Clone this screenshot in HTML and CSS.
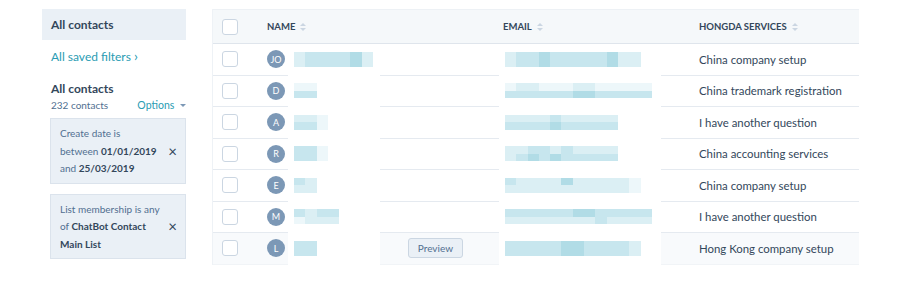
FILE: index.html
```html
<!DOCTYPE html>
<html lang="en">

<head>
    <meta charset="UTF-8">
    <meta name="viewport" content="width=device-width, initial-scale=1.0">
    <title>Contacts</title>
    <link rel="stylesheet" href="styles.css">
</head>

<body>
    <div class="page">
        <aside class="sidebar">
            <div class="view-current">All contacts</div>
            <a class="saved-link" href="#">All saved filters <span class="chev">&rsaquo;</span></a>
            <div class="list-title">All contacts</div>
            <div class="list-meta">
                <span>232 contacts</span>
                <span class="options">Options <span class="caret"></span></span>
            </div>
            <div class="filter">
                <p>
                    <span class="line">Create date is</span>
                    <span class="line">between <b>01/01/2019</b></span>
                    <span class="line">and <b>25/03/2019</b></span>
                </p>
                <span class="remove">&times;</span>
            </div>
            <div class="filter second">
                <p>
                    <span class="line">List membership is any</span>
                    <span class="line">of <b>ChatBot Contact</b></span>
                    <span class="line"><b>Main List</b></span>
                </p>
                <span class="remove">&times;</span>
            </div>
        </aside>

        <main class="contacts">
            <div class="row head">
                <div><span class="checkbox"></span></div>
                <div class="th">Name <span class="sort"></span></div>
                <div class="th">Email <span class="sort"></span></div>
                <div class="th">Hongda Services <span class="sort"></span></div>
            </div>

            <div class="row">
                <div><span class="checkbox"></span></div>
                <div class="name"><span class="avatar">JO</span><div class="blur name-blur" data-px="1222231|1222231"></div></div>
                <div><div class="blur email-blur" data-px="122322222311|122322222311"></div></div>
                <div class="service">China company setup</div>
            </div>
            <div class="row">
                <div><span class="checkbox"></span></div>
                <div class="name"><span class="avatar">D</span><div class="blur name-blur" data-px="00|22"></div></div>
                <div><div class="blur email-blur" data-px="0110001100000|2222223322222"></div></div>
                <div class="service">China trademark registration</div>
            </div>
            <div class="row">
                <div><span class="checkbox"></span></div>
                <div class="name"><span class="avatar">A</span><div class="blur name-blur" data-px="110|220"></div></div>
                <div><div class="blur email-blur" data-px="1111211111|2222322222"></div></div>
                <div class="service">I have another question</div>
            </div>
            <div class="row">
                <div><span class="checkbox"></span></div>
                <div class="name"><span class="avatar">R</span><div class="blur name-blur" data-px="220|220"></div></div>
                <div><div class="blur email-blur" data-px="1122121111|1232322222"></div></div>
                <div class="service">China accounting services</div>
            </div>
            <div class="row">
                <div><span class="checkbox"></span></div>
                <div class="name"><span class="avatar">E</span><div class="blur name-blur" data-px="21|11"></div></div>
                <div><div class="blur email-blur" data-px="211113111110|111111111110"></div></div>
                <div class="service">China company setup</div>
            </div>
            <div class="row">
                <div><span class="checkbox"></span></div>
                <div class="name"><span class="avatar">M</span><div class="blur name-blur" data-px="2122|0111"></div></div>
                <div><div class="blur email-blur" data-px="2222223322222|1111111121111"></div></div>
                <div class="service">I have another question</div>
            </div>
            <div class="row hover">
                <div><span class="checkbox"></span></div>
                <div class="name"><span class="avatar">L</span><div class="blur name-blur" data-px="22|22"></div><button class="preview">Preview</button></div>
                <div><div class="blur email-blur" data-px="222223322221|222223322221"></div></div>
                <div class="service">Hong Kong company setup</div>
            </div>
        </main>
    </div>
    <script src="script.js"></script>
</body>

</html>
```

FILE: styles.css
```css
body {
    margin: 0;
    font-family: Lato, "Open Sans", sans-serif;
    color: #33475b;
    background-color: #fff;
}

.page {
    display: flex;
    gap: 26px;
    padding: 9px 0 0 42px;
}

/* sidebar */

.sidebar {
    width: 144px;
    flex: none;
}

.view-current {
    height: 31px;
    display: flex;
    align-items: center;
    padding-left: 9px;
    background-color: #eaf0f6;
    font-size: 12px;
    font-weight: 700;
}

.saved-link {
    display: block;
    margin: 9px 0 0 9px;
    font-size: 12px;
    line-height: 14px;
    color: #2a9cb3;
    text-decoration: none;
}

.chev {
    font-size: 14px;
}

.list-title {
    margin: 18px 0 0 9px;
    font-size: 12px;
    font-weight: 700;
    line-height: 14px;
}

.list-meta {
    display: flex;
    justify-content: space-between;
    align-items: center;
    margin: 2px 0 0 9px;
    font-size: 10px;
    line-height: 14px;
    color: #516f90;
}

.options {
    font-size: 10.5px;
    color: #2a9cb3;
}

.caret {
    display: inline-block;
    margin-left: 3px;
    vertical-align: 2px;
    border-left: 3px solid transparent;
    border-right: 3px solid transparent;
    border-top: 3px solid #7c98b6;
}

.filter {
    display: flex;
    align-items: center;
    justify-content: space-between;
    margin: 6px 0 0 8px;
    padding: 6px 8px 5px 9px;
    background-color: #eaf0f6;
    border: 1px solid #dbe3ec;
    font-size: 10px;
    line-height: 17.5px;
    color: #516f90;
}

.filter.second {
    margin-top: 10px;
}

.filter p {
    margin: 0;
}

.filter .line {
    display: block;
    white-space: nowrap;
}

.filter b {
    color: #33475b;
}

.remove {
    font-size: 15px;
    color: #33475b;
}

/* table */

.contacts {
    width: 646px;
    border-left: 1px solid #eef2f6;
}

.row {
    display: grid;
    grid-template-columns: 54px 236px 196px 1fr;
    align-items: center;
    height: 31.5px;
    box-sizing: border-box;
    border-bottom: 1px solid #e5eaf0;
}

.row.head {
    position: relative;
    z-index: 1;
    height: 35px;
    background-color: #f5f8fa;
    border-top: 1px solid #edf1f5;
    border-bottom-color: #dfe5ec;
}

.row.hover {
    background-color: #f8fafc;
    border-bottom-color: #f1f4f7;
}

.th {
    display: flex;
    align-items: center;
    font-size: 9.5px;
    font-weight: 700;
    text-transform: uppercase;
}

.sort {
    display: inline-flex;
    flex-direction: column;
    gap: 2px;
    margin-left: 5px;
}

.sort::before,
.sort::after {
    content: "";
    border-left: 3px solid transparent;
    border-right: 3px solid transparent;
}

.sort::before {
    border-bottom: 3px solid #cbd6e2;
}

.sort::after {
    border-top: 3px solid #cbd6e2;
}

.checkbox {
    display: block;
    width: 14px;
    height: 14px;
    margin-left: 9px;
    border: 1px solid #cbd6e2;
    border-radius: 3px;
    background-color: #fff;
}

.name {
    display: flex;
    align-items: center;
    gap: 9px;
}

.avatar {
    width: 18px;
    height: 18px;
    border-radius: 50%;
    background-color: #7c98b6;
    color: #fff;
    font-size: 9px;
    display: flex;
    justify-content: center;
    align-items: center;
}

.blur {
    height: 22px;
    display: flex;
    flex-direction: column;
    justify-content: center;
    background-color: #fff;
    box-shadow: 0 0 0 6px #fff;
}

.name-blur {
    width: 80px;
}

.email-blur {
    width: 150px;
    margin-left: 2px;
}

.px-row {
    display: flex;
}

.px-row span {
    width: 11.3px;
    height: 7.5px;
}

.s0 { background-color: #edf7fa; }
.s1 { background-color: #dbeff4; }
.s2 { background-color: #c7e6ee; }
.s3 { background-color: #b1dce6; }

.preview {
    margin: 0 40px 0 auto;
    padding: 3px 9px;
    font-family: inherit;
    font-size: 10px;
    color: #516f90;
    background-color: #eaf0f6;
    border: 1px solid #cbd6e2;
    border-radius: 3px;
}

.service {
    font-size: 11.4px;
}
```

FILE: script.js
```js
// fill the pixelated placeholders from their data-px patterns
document.querySelectorAll('.blur').forEach(blur => {
    blur.dataset.px.split('|').forEach(line => {
        const row = document.createElement('div')
        row.className = 'px-row'
        for (const shade of line) {
            const cell = document.createElement('span')
            cell.className = 's' + shade
            row.appendChild(cell)
        }
        blur.appendChild(row)
    })
})
```
